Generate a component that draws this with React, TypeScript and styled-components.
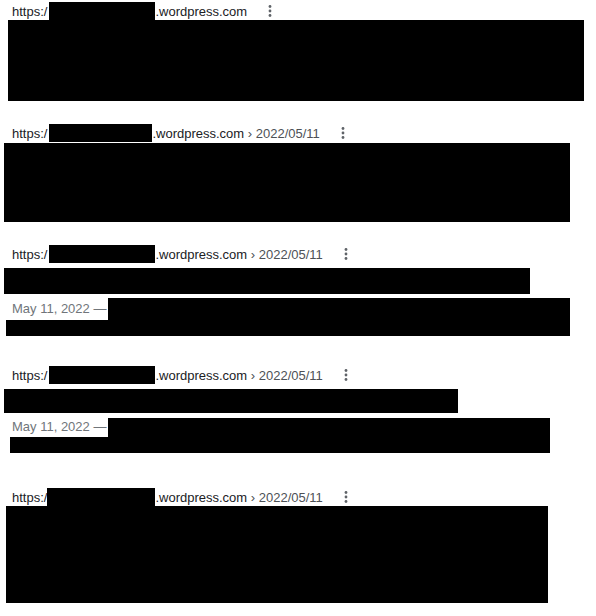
import styled, { createGlobalStyle } from 'styled-components';

const GlobalStyle = createGlobalStyle`
  html, body {
    margin: 0;
    padding: 0;
    background: #ffffff;
  }
  body {
    font-family: Arial, "Liberation Sans", sans-serif;
    color: #202124;
  }
`;

const Page = styled.div`
  width: 596px;
  height: 616px;
  overflow: hidden;
  background: #ffffff;
`;

const Result = styled.div<{ $mt: number }>`
  margin-top: ${p => p.$mt}px;
`;

const UrlRow = styled.div`
  display: flex;
  align-items: center;
  height: 18px;
  padding-left: 12px;
  font-size: 13px;
  line-height: 18px;
  white-space: nowrap;
`;

const Site = styled.span`
  color: #202124;
  padding-top: 1px;
`;

const Crumb = styled.span`
  color: #4d5156;
  padding-top: 1px;
`;

const Redact = styled.div<{ $w?: number; $h: number; $ml?: number; $mt?: number }>`
  background: #000000;
  flex: ${p => (p.$w ? `0 0 ${p.$w}px` : '1 1 auto')};
  width: ${p => (p.$w ? `${p.$w}px` : 'auto')};
  height: ${p => p.$h}px;
  margin-left: ${p => p.$ml ?? 0}px;
  margin-top: ${p => p.$mt ?? 0}px;
`;

const Kebab = styled.button`
  display: flex;
  align-items: center;
  justify-content: center;
  width: 14px;
  height: 18px;
  margin-left: 16px;
  padding: 0;
  border: none;
  background: none;
`;

const DateRow = styled.div<{ $w: number; $h: number; $mt: number }>`
  display: flex;
  align-items: center;
  width: ${p => p.$w}px;
  height: ${p => p.$h}px;
  margin-top: ${p => p.$mt}px;
  font-size: 13px;
`;

const DateText = styled.span`
  padding-left: 12px;
  padding-right: 2px;
  padding-bottom: 2px;
  color: #70757a;
  white-space: nowrap;
`;

const Dots = () => (
  <Kebab aria-label="More options">
    <svg width="4" height="14" viewBox="0 0 4 14">
      <circle cx="2" cy="2.5" r="1.4" fill="#5f6368" />
      <circle cx="2" cy="7" r="1.4" fill="#5f6368" />
      <circle cx="2" cy="11.5" r="1.4" fill="#5f6368" />
    </svg>
  </Kebab>
);

type UrlProps = { hideWidth: number; hideGap?: number; crumb?: string };

const Url = ({ hideWidth, hideGap = 2, crumb }: UrlProps) => (
  <UrlRow>
    <Site>https:/</Site>
    <Redact $w={hideWidth} $h={18} $ml={hideGap} />
    <Site>.wordpress.com</Site>
    {crumb && <Crumb>&nbsp;› {crumb}</Crumb>}
    <Dots />
  </UrlRow>
);

export default function App() {
  return (
    <Page>
      <GlobalStyle />

      <Result $mt={2}>
        <Url hideWidth={106} />
        <Redact $w={576} $h={81} $ml={8} />
      </Result>

      <Result $mt={23}>
        <Url hideWidth={103} crumb="2022/05/11" />
        <Redact $w={566} $h={79} $ml={4} $mt={1} />
      </Result>

      <Result $mt={23}>
        <Url hideWidth={106} crumb="2022/05/11" />
        <Redact $w={526} $h={26} $ml={4} $mt={5} />
        <DateRow $w={570} $h={22} $mt={4}>
          <DateText>May 11, 2022 —</DateText>
          <Redact $h={22} />
        </DateRow>
        <Redact $w={564} $h={16} $ml={6} />
      </Result>

      <Result $mt={30}>
        <Url hideWidth={106} crumb="2022/05/11" />
        <Redact $w={454} $h={24} $ml={4} $mt={5} />
        <DateRow $w={550} $h={19} $mt={5}>
          <DateText>May 11, 2022 —</DateText>
          <Redact $h={19} />
        </DateRow>
        <Redact $w={540} $h={16} $ml={10} />
      </Result>

      <Result $mt={35}>
        <Url hideWidth={108} hideGap={0} crumb="2022/05/11" />
        <Redact $w={542} $h={97} $ml={6} />
      </Result>
    </Page>
  );
}
